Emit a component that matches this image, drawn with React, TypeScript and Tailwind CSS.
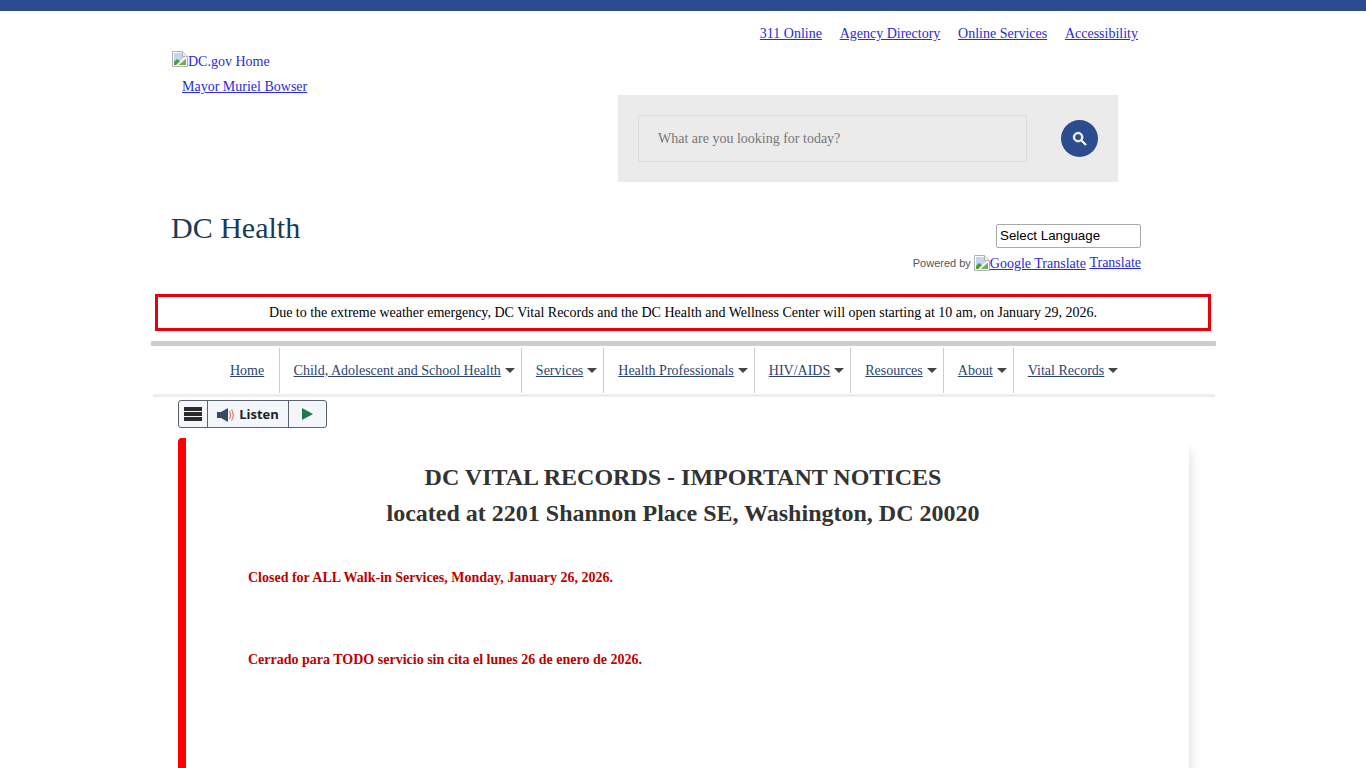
const topLinks = ['311 Online', 'Agency Directory', 'Online Services', 'Accessibility'];
const navItems = [
  { label: 'Home', caret: false },
  { label: 'Child, Adolescent and School Health', caret: true },
  { label: 'Services', caret: true },
  { label: 'Health Professionals', caret: true },
  { label: 'HIV/AIDS', caret: true },
  { label: 'Resources', caret: true },
  { label: 'About', caret: true },
  { label: 'Vital Records', caret: true },
];

function BrokenImage({ className = '' }: { className?: string }) {
  return (
    <svg width="16" height="16" viewBox="0 0 16 16" className={`shrink-0 ${className}`}>
      <path d="M.5.5h10l5 5v10H.5z" fill="#fff" stroke="#b0b0b0" />
      <path d="M10.5.5v5h5" fill="#eeeeee" stroke="#b0b0b0" />
      <path d="M2 2h8v4h4v3l-6 5H2z" fill="#c3d5f4" />
      <path d="M2 14V11l3-3 4 3-3 3z" fill="#4f9a3c" />
      <path d="M7 14l7-6v6z" fill="#6cb04f" />
      <path d="M5 14l9-8" stroke="#fff" strokeWidth="1.5" />
    </svg>
  );
}

function Caret() {
  return <span className="ml-[4px] h-0 w-0 border-x-[5px] border-t-[5px] border-x-transparent border-t-[#444]" />;
}

export default function App() {
  return (
    <div className="h-screen overflow-hidden bg-white font-['Liberation_Serif',serif] text-[14px] text-[#2a2ae0]">
      <div className="h-[11px] bg-[#2b4c8f]" />

      <div className="ml-[151px] w-[1065px]">
        {/* top links */}
        <div className="flex h-[30px] items-end justify-end gap-[17.75px] pr-[78px] leading-[14px]">
          {topLinks.map((l) => (
            <a key={l} href="#" className="underline">{l}</a>
          ))}
        </div>

        {/* logo + search */}
        <div className="flex h-[141px] items-start">
          <div className="w-[467px] pl-[21px] pt-[10px]">
            <a href="#" className="flex h-[19px] items-end leading-[16px]">
              <BrokenImage className="self-start" />
              <span>DC.gov Home</span>
            </a>
            <a href="#" className="mt-[9px] block pl-[10px] leading-[16px] underline">Mayor Muriel Bowser</a>
          </div>
          <div className="mt-[54px] flex h-[87px] w-[500px] items-center bg-[#ebebeb] pl-[20px]">
            <div className="flex h-[47px] w-[389px] items-center border border-[#dcdcdc] pl-[19px] text-[#767676]">
              What are you looking for today?
            </div>
            <button className="ml-[34px] flex h-[37px] w-[37px] items-center justify-center rounded-full bg-[#2b4c8f]">
              <svg width="18" height="18" viewBox="0 0 24 24" fill="#fff" stroke="#fff" strokeWidth="1">
                <path d="M15.5 14h-.79l-.28-.27A6.471 6.471 0 0 0 16 9.5 6.5 6.5 0 1 0 9.5 16c1.61 0 3.09-.59 4.23-1.57l.27.28v.79l5 4.99L20.49 19l-4.99-5zm-6 0C7.01 14 5 11.99 5 9.5S7.01 5 9.5 5 14 7.01 14 9.5 11.99 14 9.5 14z" />
              </svg>
            </button>
          </div>
        </div>

        {/* title + translate */}
        <div className="flex h-[112px] items-start justify-between pr-[75px]">
          <h1 className="mt-[26px] pl-[20px] text-[30px] leading-[40px] text-[#1b3a57]">DC Health</h1>
          <div className="mt-[42px] flex flex-col items-end">
            <div className="flex h-[24px] w-[145px] items-center rounded-[2px] border border-[#a9a9a9] pb-[1px] pl-[3px] font-['Liberation_Sans',sans-serif] text-[13.33px] text-black">
              Select Language
            </div>
            <div className="mt-[6px] flex h-[18px] items-center">
              <span className="mr-[3px] font-['Liberation_Sans',sans-serif] text-[11px] text-[#555]">Powered by</span>
              <BrokenImage />
              <a href="#" className="underline">Google Translate</a>
              <a href="#" className="mb-[2px] ml-[3.5px] underline">Translate</a>
            </div>
          </div>
        </div>

        {/* alert */}
        <div className="ml-[4px] flex h-[37px] w-[1056px] items-center justify-center border-[3px] border-[#e8000d] text-black">
          Due to the extreme weather emergency, DC Vital Records and the DC Health and Wellness Center will open starting at 10 am, on January 29, 2026.
        </div>

        {/* nav */}
        <div className="mt-[10px] h-[5px] rounded-[1px] bg-[#cccccc]" />
        <nav className="ml-[2px] mr-[1px] flex h-[51px] items-center border-b-[3px] border-[#eeeeee] pl-[63px] text-[#2b4473]">
          {navItems.map((item, i) => (
            <div
              key={item.label}
              className={`flex h-[45px] items-center pl-[14px] ${item.caret ? 'pr-[6px]' : 'pr-[14.4px]'} ${i < navItems.length - 1 ? 'border-r border-[#cccccc]' : ''}`}
            >
              <a href="#" className="underline">{item.label}</a>
              {item.caret && <Caret />}
            </div>
          ))}
        </nav>

        {/* listen widget */}
        <div className="ml-[27px] mt-[3px] flex h-[28px] w-[149px] overflow-hidden rounded-[3px] border border-[#5a6270] bg-[#f3f7fb]">
          <div className="flex w-[29px] flex-col items-center justify-center gap-[1px] border-r border-[#5a6270]">
            <span className="h-[4px] w-[18px] bg-[#2a2a2a]" />
            <span className="h-[4px] w-[18px] bg-[#2a2a2a]" />
            <span className="h-[4px] w-[18px] bg-[#2a2a2a]" />
          </div>
          <div className="flex w-[81px] items-center justify-center gap-[4px] border-r border-[#5a6270] pt-[1px] font-['Open_Sans',sans-serif] text-[13px] font-bold text-[#222]">
            <svg width="18" height="14" viewBox="0 0 18 14">
              <path d="M0 4h4l7-4v14l-7-4H0z" fill="#3a4a66" />
              <path d="M12.5 3q2 4 0 8M14.5 1.5q3.5 5.5 0 11" fill="none" stroke="#e07a6a" strokeWidth="1.2" />
            </svg>
            Listen
          </div>
          <div className="flex flex-1 items-center justify-center">
            <svg width="11" height="12" viewBox="0 0 11 12">
              <path d="M0 0l11 6-11 6z" fill="#1f7a4d" />
            </svg>
          </div>
        </div>

        {/* notice card */}
        <div className="ml-[27px] mt-[10px] h-[500px] w-[1011px] rounded-tl-[4px] border-l-[8px] border-[#ff0000] bg-white pl-[62px] shadow-[5px_10px_10px_-2px_rgba(0,0,0,0.1)]">
          <h2 className="-ml-[62px] pr-[9px] pt-[21px] text-center text-[24px] font-bold leading-[36px] text-[#333]">
            DC VITAL RECORDS - IMPORTANT NOTICES
            <br />
            located at 2201 Shannon Place SE, Washington, DC 20020
          </h2>
          <p className="mt-[39px] font-bold leading-[16px] text-[#c00000]">Closed for ALL Walk-in Services, Monday, January 26, 2026.</p>
          <p className="mt-[66px] font-bold leading-[16px] text-[#c00000]">Cerrado para TODO servicio sin cita el lunes 26 de enero de 2026.</p>
        </div>
      </div>
    </div>
  );
}
